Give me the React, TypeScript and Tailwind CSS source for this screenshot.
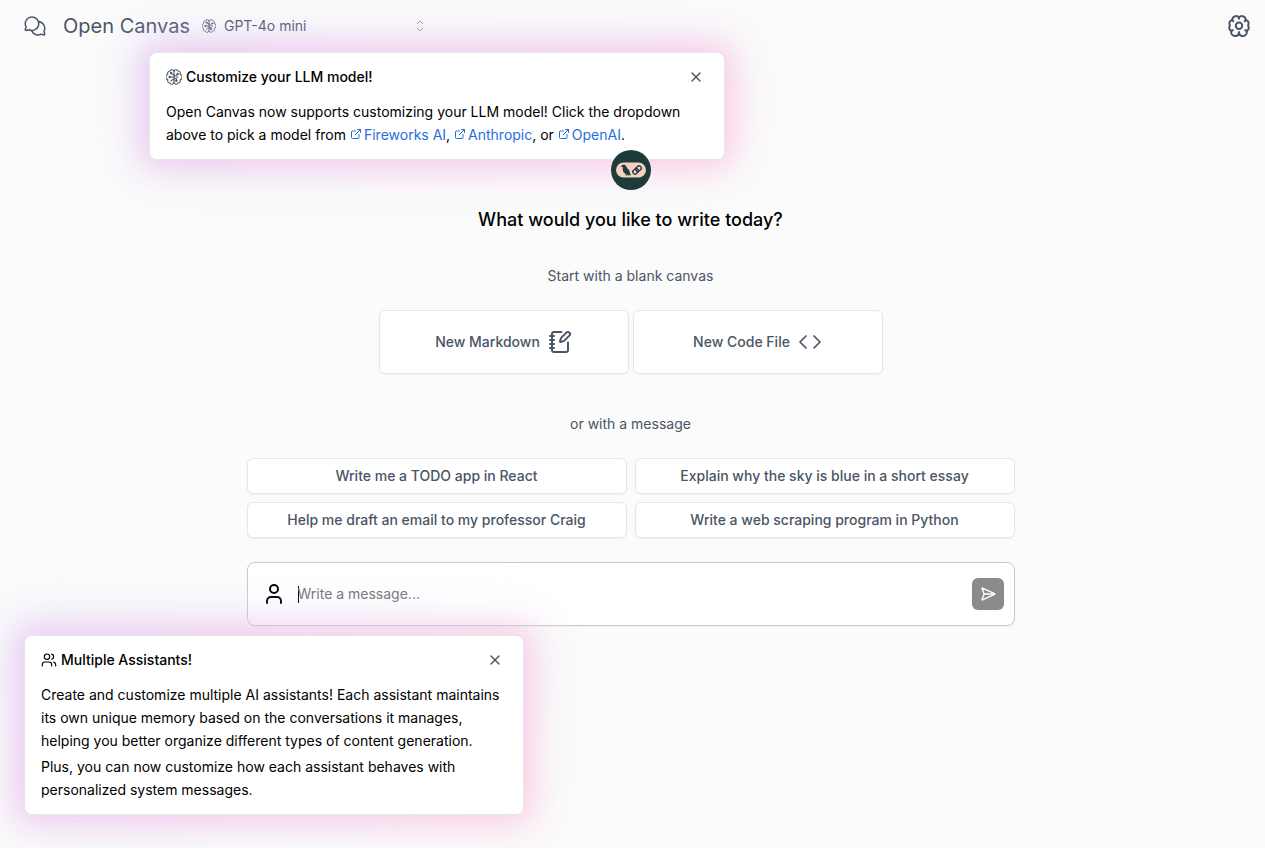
import { useState } from 'react';
import type { ReactNode } from 'react';
import { Code, ExternalLink, NotebookPen, SendHorizontal, User, Users, X } from 'lucide-react';
import { PiChatsCircle } from 'react-icons/pi';

const quickStarts = [
  'Write me a TODO app in React',
  'Explain why the sky is blue in a short essay',
  'Help me draft an email to my professor Craig',
  'Write a web scraping program in Python',
];

function LLMIcon({ className }: { className?: string }) {
  return (
    <svg viewBox="0 0 24 24" fill="none" stroke="currentColor" strokeWidth="1.6" strokeLinecap="round" strokeLinejoin="round" className={className} aria-hidden="true">
      <path d="M12 3.5a3.4 3.4 0 0 0-6.2-.6 3.6 3.6 0 0 0-3 5 4.3 4.3 0 0 0 0 8.2 3.6 3.6 0 0 0 3 5 3.4 3.4 0 0 0 6.2-.6z" />
      <path d="M12 3.5a3.4 3.4 0 0 1 6.2-.6 3.6 3.6 0 0 1 3 5 4.3 4.3 0 0 1 0 8.2 3.6 3.6 0 0 1-3 5 3.4 3.4 0 0 1-6.2-.6" />
      <path d="M12 8H9.5L8 6.5M12 12H6M12 16H9.5L7.5 18M12 10h3l2-2M12 14h3.5v3M18 12h-2" />
      <circle cx="7.5" cy="6" r="1" />
      <circle cx="5.5" cy="12" r="1" />
      <circle cx="17.5" cy="7.5" r="1" />
      <circle cx="15.5" cy="17.5" r="1" />
    </svg>
  );
}

function BrainGearIcon() {
  return (
    <svg viewBox="0 0 24 24" fill="none" stroke="currentColor" strokeWidth="2" strokeLinecap="round" strokeLinejoin="round" className="size-6" aria-hidden="true">
      <path d="M12 3.7a3.7 3.7 0 0 0-6.7 2.4 3.4 3.4 0 0 0-2.3 5.4 3.6 3.6 0 0 0 1.3 5.5 3.8 3.8 0 0 0 7.7 2.1 3.8 3.8 0 0 0 7.7-2.1 3.6 3.6 0 0 0 1.3-5.5 3.4 3.4 0 0 0-2.3-5.4A3.7 3.7 0 0 0 12 3.7Z" />
      <circle cx="12" cy="11.7" r="3.2" />
      <path d="M12 3.7v1M12 19.1v-1M5.3 6.1l1 1.2M18.7 6.1l-1 1.2M4.3 17l1.6-.8M19.7 17l-1.6-.8" />
    </svg>
  );
}

function LangChainLogo() {
  return (
    <svg viewBox="0 0 40 40" className="size-10" role="img" aria-label="LangChain">
      <circle cx="20" cy="20" r="20" fill="#1c3c3c" />
      <rect x="5" y="12.5" width="30" height="15" rx="7.5" fill="#f6cfc0" />
      <path fill="#1c3c3c" d="M10.3 16c.9-1.7 3.6-1.8 4.8-.1.6.9.5 1.7 1.4 2.6 1.7 1.5 2.5 2.8 2.3 4.5l1.5 2.2-2-.5.2.8h-1.4l-.7-.9-.6.9h-1.3l.4-1.4c-2-.7-3.2-2.6-3.1-5 0-1 .1-1.8-.1-2.3l-1.8.2z" />
      <g fill="none" stroke="#1c3c3c" strokeWidth="1.3" transform="rotate(-43 26 20)">
        <rect x="21" y="17.8" width="6" height="4.4" rx="2.2" />
        <rect x="25" y="17.8" width="6" height="4.4" rx="2.2" />
      </g>
    </svg>
  );
}

function NoticeCard({ icon, title, className, children }: { icon: ReactNode; title: string; className: string; children: ReactNode }) {
  const [open, setOpen] = useState(true);
  if (!open) return null;

  return (
    <section className={`absolute isolate ${className}`}>
      <div className="absolute -inset-2 -z-10 rounded-2xl bg-linear-to-r from-[#e8a4e4] to-[#fba6d0] opacity-60 blur-lg" />
      <div className="absolute -inset-6 -z-10 rounded-3xl bg-linear-to-br from-indigo-200 to-pink-100 opacity-20 blur-xl" />
      <div className="rounded-lg border border-gray-200 bg-white px-4 pt-3 pb-[13px]">
        <div className="mb-[11px] flex items-center justify-between">
          <h2 className="flex items-center gap-1 text-sm font-medium text-black">
            {icon}
            {title}
          </h2>
          <button type="button" aria-label="Close" onClick={() => setOpen(false)} className="p-1 text-gray-600">
            <X className="size-4" />
          </button>
        </div>
        <div className="space-y-[3px] text-sm leading-[23px] text-black">{children}</div>
      </div>
    </section>
  );
}

function ProviderLink({ href, children }: { href: string; children: ReactNode }) {
  return (
    <a href={href} className="text-[#1f6fe0]">
      <ExternalLink className="mr-0.5 mb-1 inline size-3" />
      {children}
    </a>
  );
}

export default function App() {
  const [message, setMessage] = useState('');

  return (
    <div className="relative min-h-screen bg-[#fbfbfb] pr-1 font-['Inter',sans-serif]">
      <header className="flex h-[52px] items-center justify-between pr-2.5 pl-[23px] text-gray-600">
        <div className="flex items-center">
          <button type="button" aria-label="Conversation history">
            <PiChatsCircle className="size-6" />
          </button>
          <h1 className="ml-4 text-xl">Open Canvas</h1>
          <button type="button" className="ml-3 flex w-[222px] items-center text-sm">
            <LLMIcon className="mr-2 size-3.5" />
            GPT-4o mini
            <svg viewBox="0 0 8 12" fill="none" stroke="currentColor" className="ml-auto h-3 w-2 opacity-60" aria-hidden="true">
              <path d="M1 4l3-3 3 3M1 8l3 3 3-3" />
            </svg>
          </button>
        </div>
        <button type="button" aria-label="Assistant settings">
          <BrainGearIcon />
        </button>
      </header>

      <main className="mx-auto flex w-full max-w-3xl flex-col items-center pt-[98px]">
        <div className="relative z-20">
          <LangChainLogo />
        </div>
        <h2 className="mt-4 text-lg font-medium text-black">What would you like to write today?</h2>

        <p className="mt-[30px] text-sm leading-6 text-gray-600">Start with a blank canvas</p>
        <div className="mt-[22px] flex w-full justify-center gap-1">
          <button type="button" className="flex h-16 w-[250px] items-center justify-center gap-2 rounded-md border border-gray-200 bg-white text-sm font-medium text-gray-600 shadow-xs">
            New Markdown
            <NotebookPen className="size-6" />
          </button>
          <button type="button" className="flex h-16 w-[250px] items-center justify-center gap-2 rounded-md border border-gray-200 bg-white text-sm font-medium text-gray-600 shadow-xs">
            New Code File
            <Code className="size-6" strokeWidth={1.7} />
          </button>
        </div>

        <p className="mt-[38px] text-sm leading-6 text-gray-600">or with a message</p>
        <div className="mt-[22px] grid w-full grid-cols-2 gap-2">
          {quickStarts.map((text) => (
            <button key={text} type="button" onClick={() => setMessage(text)} className="h-9 rounded-md border border-gray-200 bg-white text-sm font-medium text-gray-600 shadow-xs">
              {text}
            </button>
          ))}
        </div>

        <form onSubmit={(e) => e.preventDefault()} className="mt-6 flex h-16 w-full items-center rounded-lg border border-[#cbcbcf] bg-white pr-2.5 pl-3.5 shadow-xs">
          <User className="size-6 shrink-0" />
          <div className="ml-3 flex min-w-0 flex-1 items-center">
            {message === '' && <span className="-mr-px h-[17px] w-px bg-black" />}
            <input
              autoFocus
              aria-label="Message"
              placeholder="Write a message..."
              value={message}
              onChange={(e) => setMessage(e.target.value)}
              className="min-w-0 flex-1 bg-transparent text-sm text-black outline-none placeholder:text-[#757575] placeholder-shown:caret-transparent"
            />
          </div>
          <button type="submit" aria-label="Send" className="flex size-8 items-center justify-center rounded-md bg-[#8b8b8b] text-white">
            <SendHorizontal className="size-4" />
          </button>
        </form>
      </main>

      <NoticeCard icon={<LLMIcon className="size-4 text-gray-600" />} title="Customize your LLM model!" className="top-[52px] left-[149px] z-10 w-full max-w-xl">
        <p>
          Open Canvas now supports customizing your LLM model! Click the dropdown above to pick a model from{' '}
          <ProviderLink href="#fireworks">Fireworks AI</ProviderLink>, <ProviderLink href="#anthropic">Anthropic</ProviderLink>, or{' '}
          <ProviderLink href="#openai">OpenAI</ProviderLink>.
        </p>
      </NoticeCard>

      <NoticeCard icon={<Users className="size-4" strokeWidth={1.7} />} title="Multiple Assistants!" className="bottom-[33px] left-6 z-10 w-full max-w-[500px]">
        <p>
          Create and customize multiple AI assistants! Each assistant maintains its own unique memory based on the conversations it manages,
          helping you better organize different types of content generation.
        </p>
        <p>Plus, you can now customize how each assistant behaves with personalized system messages.</p>
      </NoticeCard>
    </div>
  );
}
